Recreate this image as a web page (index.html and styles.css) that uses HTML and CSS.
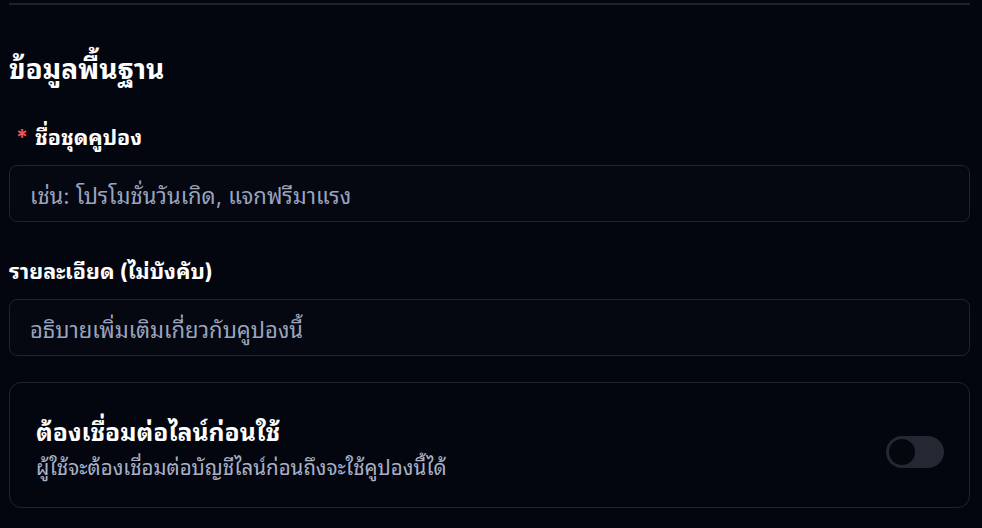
FILE: index.html
```html
<!DOCTYPE html>
<html lang="th">
<head>
<meta charset="utf-8">
<link rel="stylesheet" href="styles.css">
</head>
<body>
<div class="page">
  <div class="divider"></div>
  <section class="section">
    <h2 class="section-title">ข้อมูลพื้นฐาน</h2>
    <div class="field">
      <label class="label"><span class="req">*</span>ชื่อชุดคูปอง</label>
      <div class="input"><span class="placeholder">เช่น: โปรโมชั่นวันเกิด, แจกฟรีมาแรง</span></div>
    </div>
    <div class="field">
      <label class="label">รายละเอียด (ไม่บังคับ)</label>
      <div class="input"><span class="placeholder">อธิบายเพิ่มเติมเกี่ยวกับคูปองนี้</span></div>
    </div>
    <div class="card">
      <div class="card-text">
        <div class="card-title">ต้องเชื่อมต่อไลน์ก่อนใช้</div>
        <div class="card-desc">ผู้ใช้จะต้องเชื่อมต่อบัญชีไลน์ก่อนถึงจะใช้คูปองนี้ได้</div>
      </div>
      <div class="toggle"><div class="knob"></div></div>
    </div>
  </section>
</div>
</body>
</html>
```
FILE: styles.css
```css
html, body {
  margin: 0;
  padding: 0;
  background: #04060f;
}
body {
  font-family: "Inter", "Noto Sans Thai Looped", sans-serif;
  color: #ffffff;
}
.page {
  padding: 3px 12px 0 9px;
}
.divider {
  height: 2px;
  background: #1d222d;
}
.section-title {
  margin: 46px 0 0;
  font-size: 28px;
  font-weight: 700;
  line-height: 36px;
}
.field {
  margin-top: 36px;
}
.field + .field {
  margin-top: 35px;
}
.label {
  display: flex;
  align-items: center;
  font-size: 21.5px;
  font-weight: 700;
  line-height: 28px;
  margin-bottom: 14px;
}
.req {
  color: #f05454;
  margin: 0 7px 0 7px;
}
.input {
  height: 57px;
  box-sizing: border-box;
  border: 1px solid #1f2430;
  border-radius: 8px;
  display: flex;
  align-items: center;
  padding: 0 20px;
  background: #050711;
}
.placeholder {
  font-size: 22px;
  color: #9aa4be;
}
.card {
  margin-top: 26px;
  height: 126px;
  box-sizing: border-box;
  border: 1px solid #1f2430;
  border-radius: 12px;
  display: flex;
  align-items: center;
  justify-content: space-between;
  padding: 0 25px 0 26px;
}
.card-text {
  padding-top: 7px;
}
.card-title {
  font-size: 24.7px;
  font-weight: 700;
  line-height: 34px;
}
.card-desc {
  margin-top: 4px;
  font-size: 20.5px;
  color: #a8b1c6;
  line-height: 30px;
}
.toggle {
  margin-top: 13px;
  width: 58px;
  height: 32px;
  border-radius: 16px;
  background: #232833;
  box-sizing: border-box;
  padding: 3px;
}
.knob {
  width: 26px;
  height: 26px;
  border-radius: 50%;
  background: #05070f;
}
```
